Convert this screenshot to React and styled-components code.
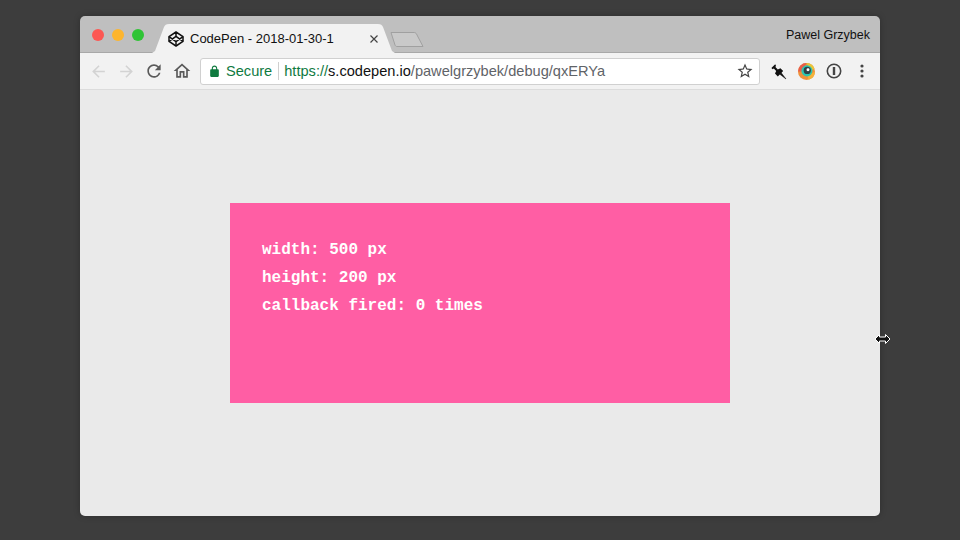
import React from 'react';
import styled, { createGlobalStyle } from 'styled-components';

const Global = createGlobalStyle`
  html, body { margin: 0; padding: 0; width: 960px; height: 540px; overflow: hidden; background: #3d3d3d; }
  #root { width: 960px; height: 540px; }
`;

const Stage = styled.div`
  position: relative;
  width: 960px;
  height: 540px;
  padding: 16px 80px 24px;
  box-sizing: border-box;
  background: #3d3d3d;
  font-family: "Liberation Sans", Arial, sans-serif;
`;

const Window = styled.div`
  display: flex;
  flex-direction: column;
  height: 500px;
  border-radius: 5px;
  overflow: hidden;
  box-shadow: 0 0 6px rgba(0, 0, 0, 0.25);
`;

const TabStrip = styled.div`
  display: flex;
  align-items: flex-end;
  height: 37px;
  flex: none;
  background: #bfbfbf;
  box-shadow: inset 0 -1px 0 #a8a8a8;
`;

const Lights = styled.div`
  display: flex;
  align-self: flex-start;
  gap: 8px;
  padding: 13px 0 0 12px;
`;

const Light = styled.span`
  width: 12px;
  height: 12px;
  border-radius: 50%;
  background: ${p => p.$color};
`;

const Tab = styled.div`
  display: flex;
  align-items: center;
  width: 243px;
  height: 29px;
  margin-left: 8px;
  padding: 0 16px;
  box-sizing: border-box;
  background: #f2f2f2;
  clip-path: path('M0 29 L3 27 L12 3 C13 1 14 0 17 0 L226 0 C229 0 230 1 231 3 L240 27 L243 29 Z');
`;

const TabTitle = styled.span`
  margin-left: 6px;
  font-size: 13px;
  color: #111;
  white-space: nowrap;
  flex: 1;
`;

const NewTab = styled.svg`
  margin: 0 0 5px -6px;
  flex: none;
`;

const Profile = styled.span`
  margin-left: auto;
  align-self: flex-start;
  padding: 12px 10px 0 0;
  font-size: 12.5px;
  line-height: 15px;
  color: #111;
`;

const Toolbar = styled.div`
  display: flex;
  align-items: center;
  height: 37px;
  flex: none;
  box-sizing: border-box;
  background: #f2f2f2;
  border-bottom: 1px solid #dcdcdc;
  padding: 0 4px;
`;

const IconSlot = styled.span`
  display: flex;
  align-items: center;
  justify-content: center;
  flex: none;
  width: 28px;
  height: 28px;
`;

const Omnibox = styled.div`
  display: flex;
  align-items: center;
  flex: 1;
  height: 27px;
  margin: 0 4px;
  padding: 0 5px 0 7px;
  box-sizing: border-box;
  background: #fff;
  border: 1px solid #d0d0d0;
  border-radius: 3px;
  font-size: 14.6px;
  white-space: nowrap;
`;

const Secure = styled.span`
  margin-left: 5px;
  padding-right: 6px;
  border-right: 1px solid #cfcfcf;
  line-height: 18px;
  color: #0f7a3f;
`;

const Url = styled.span`
  margin-left: 5px;
  flex: 1;
  color: #5f6368;
`;

const Scheme = styled.span`
  color: #0f7a3f;
`;

const Host = styled.span`
  color: #111;
`;

const Content = styled.main`
  flex: 1;
  display: flex;
  align-items: center;
  justify-content: center;
  background: #eaeaea;
`;

const Box = styled.section`
  width: 500px;
  height: 200px;
  padding: 33px 32px 31px;
  box-sizing: border-box;
  background: #ff5ea4;
  color: #fff;
  font-family: "Liberation Mono", "Courier New", monospace;
  font-weight: 700;
  font-size: 16px;
  line-height: 28px;
`;

const Line = styled.div`
  white-space: pre;
`;

const Cursor = styled.svg`
  position: absolute;
  left: 874px;
  top: 331px;
`;

const Mat = ({ d, size = 20, color = '#5a5a5a' }) => (
  <svg width={size} height={size} viewBox="0 0 24 24" fill={color}>
    <path d={d} />
  </svg>
);

const BACK = 'M20 11H7.83l5.59-5.59L12 4l-8 8 8 8 1.41-1.41L7.83 13H20v-2z';
const FWD = 'M4 11h12.17l-5.59-5.59L12 4l8 8-8 8-1.41-1.41L16.17 13H4v-2z';
const RELOAD = 'M17.65 6.35A7.958 7.958 0 0 0 12 4c-4.42 0-7.99 3.58-7.99 8s3.57 8 7.99 8c3.73 0 6.84-2.55 7.73-6h-2.08A5.99 5.99 0 0 1 12 18c-3.31 0-6-2.69-6-6s2.69-6 6-6c1.66 0 3.14.69 4.22 1.78L13 11h7V4l-2.35 2.35z';
const HOME = 'M12 5.69l5 4.5V18h-2v-6H9v6H7v-7.81l5-4.5M12 3L2 12h3v8h6v-6h2v6h6v-8h3L12 3z';
const STAR = 'M22 9.24l-7.19-.62L12 2 9.19 8.63 2 9.24l5.46 4.73L5.82 21 12 17.27 18.18 21l-1.63-7.03L22 9.24zM12 15.4l-3.76 2.27 1-4.28-3.32-2.88 4.38-.38L12 6.1l1.71 4.04 4.38.38-3.32 2.88 1 4.28L12 15.4z';
const LOCK = 'M18 8h-1V6c0-2.76-2.24-5-5-5S7 3.24 7 6v2H6c-1.1 0-2 .9-2 2v10c0 1.1.9 2 2 2h12c1.1 0 2-.9 2-2V10c0-1.1-.9-2-2-2zM9 6c0-1.66 1.34-3 3-3s3 1.34 3 3v2H9V6z';

const CodePenLogo = () => (
  <svg width="16" height="16" viewBox="0 0 16 16" fill="none" stroke="#111" strokeWidth="1.5" strokeLinejoin="round" style={{ flex: 'none' }}>
    <path d="M8 1L15 5.6V10.4L8 15L1 10.4V5.6Z" />
    <path d="M8 1V5.4M8 10.6V15M1 5.6L8 10.6L15 5.6M1 10.4L8 5.4L15 10.4" />
  </svg>
);

const CloseX = () => (
  <svg width="10" height="10" viewBox="0 0 10 10" stroke="#444" strokeWidth="1.2" style={{ flex: 'none' }}>
    <path d="M1.5 1.5L8.5 8.5M8.5 1.5L1.5 8.5" />
  </svg>
);

const Pin = () => (
  <svg width="18" height="18" viewBox="0 0 18 18" fill="#111">
    <path d="M6.2 2.2L2.4 6L3.6 7.2L4.8 6.6L7.2 9L6 11.6L8.8 14.4L14.2 9L11.4 6.2L8.8 7.4L6.4 5L7 3.8Z" />
    <path d="M10.5 12L17 17L12 10.5Z" stroke="#111" strokeWidth="0.5" />
  </svg>
);

const ColorExt = () => (
  <svg width="17" height="17" viewBox="0 0 16 16">
    <circle cx="8" cy="8" r="8" fill="#f0913a" />
    <path d="M8 0a8 8 0 0 0-8 8h4Z" fill="#e85d4a" />
    <path d="M8 0a8 8 0 0 1 7.5 5.5L12 7Z" fill="#e9c53a" />
    <path d="M16 8a8 8 0 0 1-6 7.7L9 12Z" fill="#f3b23a" />
    <circle cx="8.4" cy="7.4" r="5.2" fill="#2ec4b0" />
    <circle cx="8.7" cy="7" r="3.4" fill="#2f4148" />
    <circle cx="9.4" cy="6.4" r="1.4" fill="#fff" />
  </svg>
);

const OnePassword = () => (
  <svg width="16" height="16" viewBox="0 0 16 16" fill="none">
    <circle cx="8" cy="8" r="6.7" stroke="#444" strokeWidth="1.6" />
    <path d="M8 4v8" stroke="#444" strokeWidth="2.4" />
  </svg>
);

const Dots = () => (
  <svg width="4" height="14" viewBox="0 0 4 14" fill="#444">
    <circle cx="2" cy="2" r="1.6" />
    <circle cx="2" cy="7" r="1.6" />
    <circle cx="2" cy="12" r="1.6" />
  </svg>
);

export default function App() {
  return (
    <Stage>
      <Global />
      <Window>
        <TabStrip>
          <Lights>
            <Light $color="#fc5753" />
            <Light $color="#fdb52e" />
            <Light $color="#2fc435" />
          </Lights>
          <Tab>
            <CodePenLogo />
            <TabTitle>CodePen - 2018-01-30-1</TabTitle>
            <CloseX />
          </Tab>
          <NewTab width="36" height="17" viewBox="0 0 36 17">
            <path d="M2 1.5 H25 C26 1.5 27 2 27.5 3 L34 15.5 H8 C7 15.5 6.5 15 6 14 Z" fill="#c9c9c9" stroke="#a0a0a0" />
          </NewTab>
          <Profile>Pawel Grzybek</Profile>
        </TabStrip>
        <Toolbar>
          <IconSlot><Mat d={BACK} color="#d3d3d3" size={19} /></IconSlot>
          <IconSlot><Mat d={FWD} color="#d3d3d3" size={19} /></IconSlot>
          <IconSlot><Mat d={RELOAD} /></IconSlot>
          <IconSlot><Mat d={HOME} /></IconSlot>
          <Omnibox>
            <Mat d={LOCK} size={13} color="#0f7a3f" />
            <Secure>Secure</Secure>
            <Url>
              <Scheme>https://</Scheme>
              <Host>s.codepen.io</Host>
              /pawelgrzybek/debug/qxERYa
            </Url>
            <Mat d={STAR} size={18} color="#444" />
          </Omnibox>
          <IconSlot><Pin /></IconSlot>
          <IconSlot><ColorExt /></IconSlot>
          <IconSlot><OnePassword /></IconSlot>
          <IconSlot><Dots /></IconSlot>
        </Toolbar>
        <Content>
          <Box>
            <Line>width: 500 px</Line>
            <Line>height: 200 px</Line>
            <Line>callback fired: 0 times</Line>
          </Box>
        </Content>
      </Window>
      <Cursor width="17" height="16" viewBox="0 0 17 16">
        <path d="M1 8L5.5 3.5V6H11.5V3.5L16 8L11.5 12.5V10H5.5V12.5Z" fill="#111" stroke="#fff" strokeWidth="1" strokeLinejoin="round" />
      </Cursor>
    </Stage>
  );
}
